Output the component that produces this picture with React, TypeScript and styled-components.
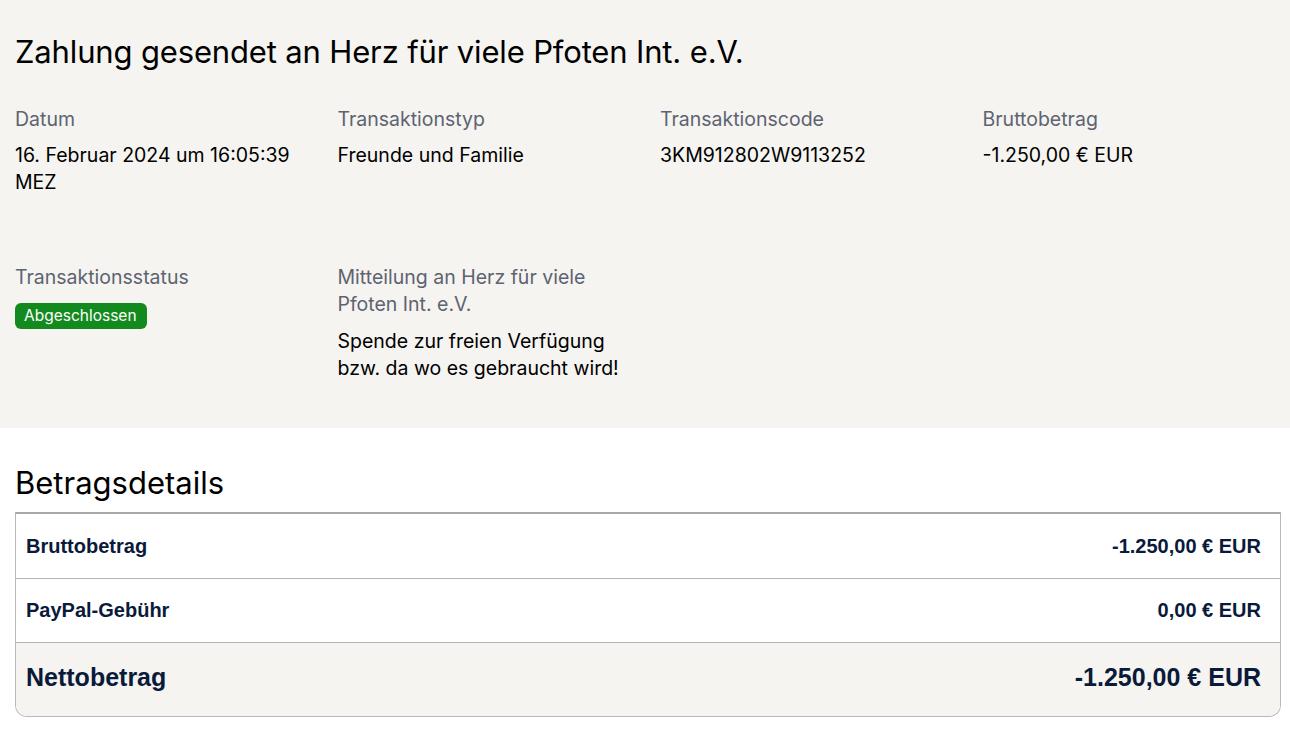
import React from "react";
import styled, { createGlobalStyle } from "styled-components";

const Global = createGlobalStyle`
  html, body { margin: 0; padding: 0; background: #ffffff; }
  body { font-family: "Inter", "Liberation Sans", Arial, sans-serif; color: #000; }
  * { box-sizing: border-box; }
`;

const Page = styled.div`
  width: 1290px;
  display: flex;
  flex-direction: column;
`;

const Summary = styled.section`
  background: #f5f4f0;
  padding: 30px 15px 46px;
  display: flex;
  flex-direction: column;
`;

const Title = styled.h1`
  margin: 0;
  font-family: "Inter", sans-serif;
  font-weight: 400;
  font-size: 31px;
  line-height: 44px;
  letter-spacing: -0.15px;
`;

const Grid = styled.div`
  margin-top: 32px;
  display: grid;
  grid-template-columns: repeat(4, 1fr);
  column-gap: 30px;
  row-gap: 68px;
`;

const Field = styled.div`
  display: flex;
  flex-direction: column;
  align-items: flex-start;
`;

const Label = styled.div`
  font-size: 19.5px;
  line-height: 27px;
  color: #5d6370;
`;

const Value = styled.div<{ $gap?: number }>`
  margin-top: ${(p) => p.$gap ?? 9}px;
  font-size: 19.5px;
  line-height: 27px;
  color: #000;
`;

const Badge = styled.span`
  margin-top: 12px;
  display: inline-block;
  background: #128a1d;
  color: #fff;
  font-size: 15.5px;
  line-height: 26px;
  padding: 0 10px 0 9px;
  border-radius: 6px;
`;

const Details = styled.section`
  padding: 36px 9px 15px 15px;
  display: flex;
  flex-direction: column;
`;

const Heading = styled.h2`
  margin: 0 0 10px;
  font-family: "Inter", sans-serif;
  font-weight: 400;
  font-size: 31px;
  line-height: 38px;
`;

const Table = styled.div`
  border: 1px solid #b9b9b9;
  border-top: 2px solid #a8a8a8;
  border-radius: 0 0 12px 12px;
  overflow: hidden;
  display: flex;
  flex-direction: column;
`;

const Row = styled.div<{ $total?: boolean }>`
  display: flex;
  justify-content: space-between;
  align-items: center;
  height: ${(p) => (p.$total ? "74px" : "64px")};
  padding: ${(p) => (p.$total ? "0 19px 4px 10px" : "0 19px 0 10px")};
  background: ${(p) => (p.$total ? "#f5f4f0" : "#ffffff")};
  border-top: 1px solid #b4b4b4;
  &:first-child { border-top: none; }
  font-family: "Liberation Sans", Arial, sans-serif;
  font-weight: 700;
  color: #0a1a3a;
  font-size: ${(p) => (p.$total ? "25px" : "20px")};
`;

const rows = [
  { label: "Bruttobetrag", amount: "-1.250,00 € EUR" },
  { label: "PayPal-Gebühr", amount: "0,00 € EUR" },
];

export default function App() {
  return (
    <Page>
      <Global />
      <Summary>
        <Title>Zahlung gesendet an Herz für viele Pfoten Int. e.V.</Title>
        <Grid>
          <Field>
            <Label>Datum</Label>
            <Value>16. Februar 2024 um 16:05:39 MEZ</Value>
          </Field>
          <Field>
            <Label>Transaktionstyp</Label>
            <Value>Freunde und Familie</Value>
          </Field>
          <Field>
            <Label>Transaktionscode</Label>
            <Value>3KM912802W9113252</Value>
          </Field>
          <Field>
            <Label>Bruttobetrag</Label>
            <Value>-1.250,00 € EUR</Value>
          </Field>
          <Field>
            <Label>Transaktionsstatus</Label>
            <Badge>Abgeschlossen</Badge>
          </Field>
          <Field>
            <Label>Mitteilung an Herz für viele Pfoten Int. e.V.</Label>
            <Value $gap={10}>Spende zur freien Verfügung bzw. da wo es gebraucht wird!</Value>
          </Field>
        </Grid>
      </Summary>
      <Details>
        <Heading>Betragsdetails</Heading>
        <Table>
          {rows.map((r) => (
            <Row key={r.label}>
              <span>{r.label}</span>
              <span>{r.amount}</span>
            </Row>
          ))}
          <Row $total>
            <span>Nettobetrag</span>
            <span>-1.250,00 € EUR</span>
          </Row>
        </Table>
      </Details>
    </Page>
  );
}
